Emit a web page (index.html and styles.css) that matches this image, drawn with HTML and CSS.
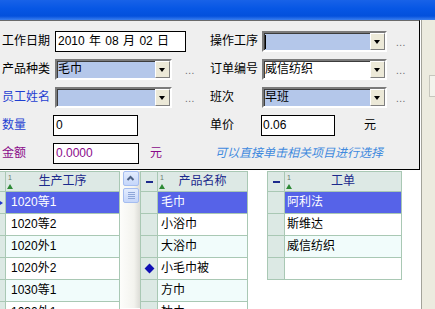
FILE: index.html
```html
<!DOCTYPE html>
<html lang="zh-CN">
<head>
    <meta charset="UTF-8">
    <title>生产录入</title>
    <link rel="stylesheet" href="styles.css">
</head>
<body>
<div class="titlebar"></div>

<div class="desk">
    <div class="work">
        <!-- entry dialog -->
        <div class="dialog">
            <div class="col col-left">
                <div class="row">
                    <span class="lbl">工作日期</span>
                    <div class="input w-date">2010 年 08 月 02 日</div>
                </div>
                <div class="row">
                    <span class="lbl">产品种类</span>
                    <div class="combo w-left">毛巾<span class="drop"></span></div>
                    <span class="dots">...</span>
                </div>
                <div class="row">
                    <span class="lbl lbl-blue">员工姓名</span>
                    <div class="combo w-left"><span class="drop"></span></div>
                    <span class="dots">...</span>
                </div>
                <div class="row">
                    <span class="lbl lbl-short lbl-blue">数量</span>
                    <div class="input w-num">0</div>
                </div>
                <div class="row">
                    <span class="lbl lbl-short lbl-purple">金额</span>
                    <div class="input w-money txt-purple">0.0000</div>
                    <span class="unit unit-left txt-purple">元</span>
                </div>
            </div>

            <div class="col col-right">
                <div class="row">
                    <span class="lbl lbl-r">操作工序</span>
                    <div class="combo w-right"><span class="caret"></span><span class="drop"></span></div>
                    <span class="dots dots-r">...</span>
                </div>
                <div class="row">
                    <span class="lbl lbl-r">订单编号</span>
                    <div class="combo combo-white w-right">威信纺织<span class="drop"></span></div>
                    <span class="dots dots-r">...</span>
                </div>
                <div class="row">
                    <span class="lbl lbl-r">班次</span>
                    <div class="combo w-right">早班<span class="drop"></span></div>
                    <span class="dots dots-r">...</span>
                </div>
                <div class="row">
                    <span class="lbl lbl-short">单价</span>
                    <div class="input w-price">0.06</div>
                    <span class="unit unit-right">元</span>
                </div>
                <div class="row">
                    <span class="hint">可以直接单击相关项目进行选择</span>
                </div>
            </div>
        </div>

        <!-- lookup grids -->
        <div class="grids">
            <div class="grid g1">
                <div class="grow head">
                    <div class="ind"></div>
                    <div class="cell"><span class="sort"><i>1</i><b></b></span>生产工序</div>
                </div>
                <div class="grow sel"><div class="ind"><span class="cur"></span></div><div class="cell">1020等1</div></div>
                <div class="grow"><div class="ind"></div><div class="cell">1020等2</div></div>
                <div class="grow alt"><div class="ind"></div><div class="cell">1020外1</div></div>
                <div class="grow"><div class="ind"></div><div class="cell">1020外2</div></div>
                <div class="grow alt"><div class="ind"></div><div class="cell">1030等1</div></div>
                <div class="grow"><div class="ind"></div><div class="cell">1030外1</div></div>
            </div>

            <div class="vscroll">
                <div class="sbtn">
                    <svg width="13" height="13" viewBox="0 0 13 13"><polyline points="3.5,8 6.5,5 9.5,8" fill="none" stroke="#4d6185" stroke-width="2"/></svg>
                </div>
                <div class="sthumb"><span></span><span></span><span></span><span></span></div>
            </div>

            <div class="grid g2">
                <div class="grow head">
                    <div class="ind"><span class="dash"></span></div>
                    <div class="cell"><span class="sort"><i>1</i><b></b></span>产品名称</div>
                </div>
                <div class="grow sel"><div class="ind"></div><div class="cell">毛巾</div></div>
                <div class="grow"><div class="ind"></div><div class="cell">小浴巾</div></div>
                <div class="grow alt"><div class="ind"></div><div class="cell">大浴巾</div></div>
                <div class="grow"><div class="ind"><span class="mark"></span></div><div class="cell">小毛巾被</div></div>
                <div class="grow alt"><div class="ind"></div><div class="cell">方巾</div></div>
                <div class="grow"><div class="ind"></div><div class="cell">枕巾</div></div>
            </div>

            <div class="grid g3">
                <div class="grow head">
                    <div class="ind"><span class="dash"></span></div>
                    <div class="cell"><span class="sort"><i>1</i><b></b></span>工单</div>
                </div>
                <div class="grow sel"><div class="ind"></div><div class="cell">阿利法</div></div>
                <div class="grow"><div class="ind"></div><div class="cell">斯维达</div></div>
                <div class="grow alt"><div class="ind"></div><div class="cell">威信纺织</div></div>
                <div class="grow"><div class="ind"></div><div class="cell"></div></div>
            </div>
        </div>
    </div>

    <div class="side">
        <div class="side-box"></div>
    </div>
</div>
</body>
</html>
```

FILE: styles.css
```css
/* base */
* {
    box-sizing: border-box;
}

body {
    margin: 0;
    width: 435px;
    height: 309px;
    overflow: hidden;
    background: #fff;
    font-family: "Liberation Sans", "Noto Sans CJK SC", sans-serif;
    font-size: 12px;
    color: #000;
}

/* window caption */
.titlebar {
    height: 20px;
    background: linear-gradient(to bottom, #1862e8 0%, #0656e4 45%, #0350dc 80%, #3a7eee 100%);
}

.desk {
    display: flex;
    height: 289px;
}

.work {
    width: 421px;
    background: #fff;
}

.side {
    flex: 1;
    border-left: 1px solid #a3a39a;
    background: #ecebdf;
    padding: 55px 0 0 7px;
}

.side-box {
    height: 22px;
    border: 1px solid #c6c6bd;
    border-right: none;
    background: #f3f3ec;
}

/* dialog */
.dialog {
    width: 420px;
    display: flex;
    background: #efefef;
    border-top: 1px solid #6a6a6a;
    border-right: 1px solid #000;
    border-bottom: 1px solid #000;
    padding: 10px 0 5px 2px;
}

.col {
    display: flex;
    flex-direction: column;
    gap: 7px;
}

.col-left {
    width: 208px;
}

.row {
    display: flex;
    align-items: center;
    height: 21px;
}

.lbl {
    width: 53px;
    line-height: 21px;
    white-space: nowrap;
}

.lbl-r {
    width: 52px;
}

.lbl-short {
    width: 51px;
}

.lbl-blue {
    color: #1f3fd2;
}

.lbl-purple,
.txt-purple {
    color: #8a0a8a;
}

.input {
    height: 21px;
    line-height: 19px;
    border: 1px solid #000;
    background: #fff;
    padding-left: 2px;
    white-space: nowrap;
}

.w-date { width: 131px; word-spacing: 1px; }
.w-num { width: 85px; }
.w-money { width: 86px; }
.w-price { width: 74px; padding-left: 1px; }

.combo {
    position: relative;
    height: 21px;
    line-height: 17px;
    border: 2px solid;
    border-color: #7b7b7b #fff #fff #7b7b7b;
    box-shadow: inset 1px 1px 0 #3c3c3c;
    background: #b4c7ea;
    padding-left: 1px;
    white-space: nowrap;
}

.combo-white {
    background: #fff;
}

.w-left { width: 117px; }
.w-right { width: 125px; }

/* dropdown button sits over the combo's right end */
.drop {
    position: absolute;
    top: 0;
    right: 0;
    width: 15px;
    height: 17px;
    background: #ece9d8;
    border: 1px solid;
    border-color: #fff #808080 #808080 #fff;
}

.drop::after {
    content: "";
    position: absolute;
    left: 3px;
    top: 6px;
    border-left: 3.5px solid transparent;
    border-right: 3.5px solid transparent;
    border-top: 4px solid #000;
}

.caret {
    display: inline-block;
    width: 1px;
    height: 14px;
    background: #000;
    vertical-align: middle;
}

.dots {
    align-self: flex-end;
    margin-left: 13px;
    padding-bottom: 4px;
    font-size: 10px;
    line-height: 1;
    color: #6a6a6a;
    letter-spacing: 0.5px;
}

.dots-r {
    margin-left: 9px;
}

.unit {
    line-height: 21px;
}

.unit-left { margin-left: 11px; }
.unit-right { margin-left: 29px; }

.hint {
    margin-left: 5px;
    color: #3f8ade;
    font-style: italic;
    line-height: 21px;
    white-space: nowrap;
}

/* lookup grids */
.grids {
    display: flex;
    align-items: flex-start;
    padding-top: 1px;
}

.grid {
    border: 1px solid #a9c8b4;
    border-bottom: none;
}

.g1 { width: 121px; margin-left: -1px; }
.g2 { width: 108px; }
.g3 { width: 135px; margin-left: 19px; }

.grow {
    display: flex;
    height: 22px;
    border-bottom: 1px solid #a9c8b4;
    background: #fff;
}

.grow.alt {
    background: #f1fcfb;
}

.grow.head {
    height: 20px;
    background: #dde9e5;
}

.ind {
    position: relative;
    display: flex;
    align-items: center;
    justify-content: center;
    border-right: 1px solid #a9c8b4;
    background: #dce9e4;
}

.g1 .ind { width: 6px; }
.g2 .ind,
.g3 .ind { width: 17px; }

.cell {
    position: relative;
    flex: 1;
    line-height: 21px;
    white-space: nowrap;
    overflow: hidden;
}

.g1 .cell { padding-left: 5px; }
.g2 .cell { padding-left: 3px; }
.g3 .cell { padding-left: 2px; }

.head .cell {
    line-height: 19px;
    text-align: center;
    color: #1c2a8c;
    padding-left: 0;
}

.grow.sel .cell {
    background: #5663e8;
    color: #fff;
}

/* sort marker in header corner */
.sort {
    position: absolute;
    left: 1px;
    top: 2px;
    width: 6px;
    display: flex;
    flex-direction: column;
    align-items: center;
}

.sort i {
    font-style: normal;
    font-size: 7px;
    line-height: 8px;
    color: #6a7a70;
}

.sort b {
    margin-top: 2px;
    border-left: 3px solid transparent;
    border-right: 3px solid transparent;
    border-bottom: 5px solid #2e8a36;
}

.dash {
    width: 7px;
    height: 2px;
    background: #1c2a8c;
}

.cur {
    position: absolute;
    left: 0;
    border-top: 2px solid transparent;
    border-bottom: 2px solid transparent;
    border-left: 3px solid #2438c8;
}

.mark {
    width: 7px;
    height: 7px;
    background: #1010b4;
    transform: rotate(45deg);
}

/* vertical scrollbar of the first grid */
.vscroll {
    width: 20px;
    height: 137px;
    padding: 0 1px 0 3px;
    background: linear-gradient(to right, #fdfdfb 0%, #f3f3ee 70%, #dcdcd6 100%);
}

.sbtn,
.sthumb {
    height: 15px;
    border: 1px solid #a5bdf0;
    border-radius: 2px;
    background: linear-gradient(to bottom, #e3ecfe, #c5d6fa);
}

.sbtn svg {
    display: block;
}

.sthumb {
    margin-top: 2px;
    padding-top: 3px;
    display: flex;
    flex-direction: column;
    align-items: center;
    gap: 1px;
}

.sthumb span {
    width: 7px;
    height: 1px;
    background: #8fa7d8;
}
```
